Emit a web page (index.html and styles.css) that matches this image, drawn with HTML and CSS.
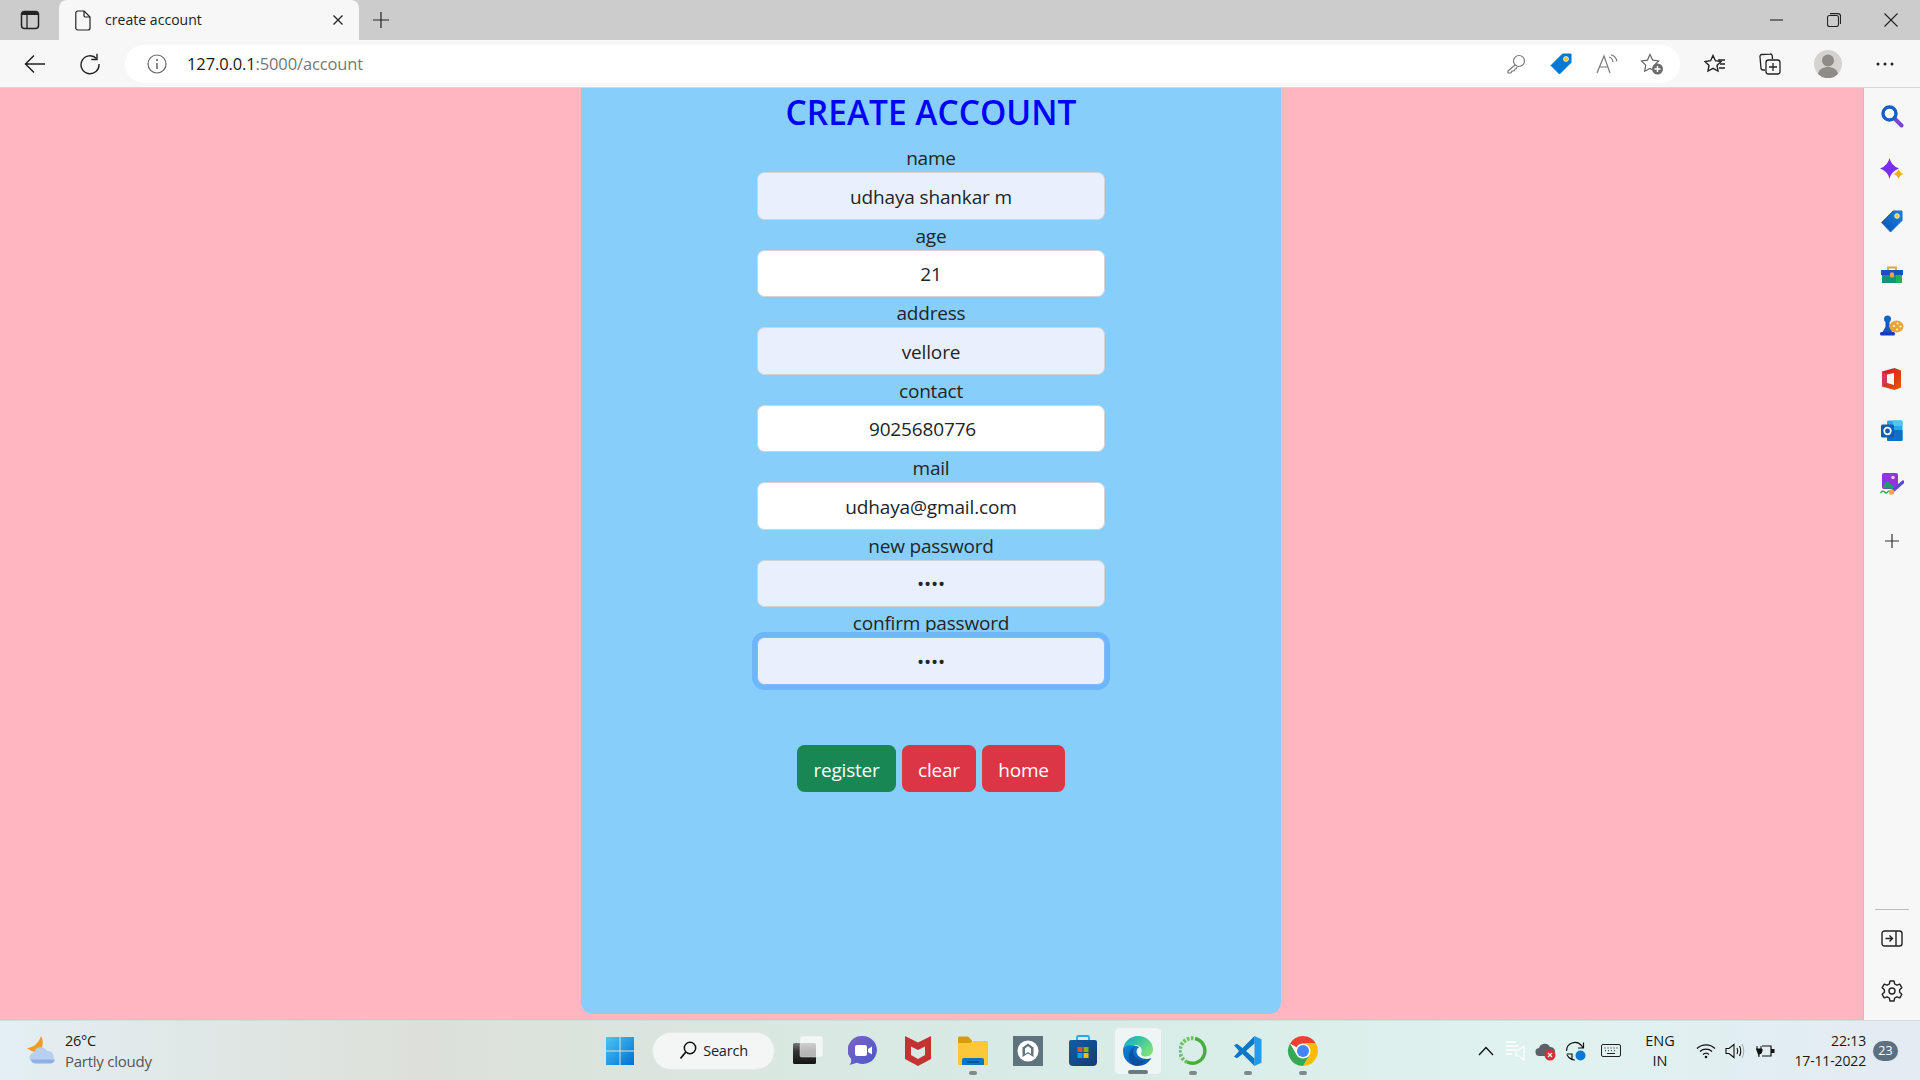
FILE: index.html
```html
<!DOCTYPE html>
<html lang="en">
<head>
<meta charset="utf-8">
<title>create account</title>
<link rel="stylesheet" href="styles.css">
</head>
<body>
<header class="tabstrip">
  <div class="strip-btn">
    <svg width="20" height="20" viewBox="0 0 20 20"><rect x="1.500" y="1.500" width="17" height="17" rx="3" fill="none" stroke="#222" stroke-width="1.500"/><path d="M2 5V3.500Q2 2 3.500 2h13Q18 2 18 3.500V5z" fill="#222"/><path d="M7 5v13" stroke="#222" stroke-width="1.300"/></svg>
  </div>
  <div class="tab">
    <svg class="tab-doc" width="16" height="21" viewBox="0 0 16 21"><path d="M2.800 1h6.400L15 7v11a2 2 0 0 1-2 2H2.800a2 2 0 0 1-2-2V3a2 2 0 0 1 2-2z" fill="none" stroke="#222" stroke-width="1.200"/><path d="M9 1v4.500A1.500 1.500 0 0 0 10.500 7H15" fill="none" stroke="#222" stroke-width="1.200"/></svg>
    <span class="tab-title">create account</span>
    <svg class="tab-close" width="12" height="12" viewBox="0 0 12 12"><path d="M1.500 1.500l9 9M10.500 1.500l-9 9" stroke="#222" stroke-width="1.300"/></svg>
  </div>
  <div class="strip-btn new-tab">
    <svg width="18" height="18" viewBox="0 0 18 18"><path d="M9 1v16M1 9h16" stroke="#222" stroke-width="1.200"/></svg>
  </div>
  <div class="win-controls">
    <div class="win-btn"><svg width="14" height="14" viewBox="0 0 14 14"><path d="M0 7h13" stroke="#222" stroke-width="1.100"/></svg></div>
    <div class="win-btn"><svg width="14" height="14" viewBox="0 0 14 14"><rect x=".5" y="2.500" width="11" height="11" rx="2" fill="none" stroke="#222" stroke-width="1.100"/><path d="M3 .6h8a2.500 2.500 0 0 1 2.500 2.500v8" fill="none" stroke="#222" stroke-width="1.100"/></svg></div>
    <div class="win-btn"><svg width="14" height="14" viewBox="0 0 14 14"><path d="M.5.5l13 13M13.500.5l-13 13" stroke="#222" stroke-width="1.100"/></svg></div>
  </div>
</header>

<nav class="toolbar">
  <div class="tb-btn">
    <svg width="22" height="20" viewBox="0 0 22 20"><path d="M21 10H2M10 1.500L1.500 10l8.500 8.500" fill="none" stroke="#222" stroke-width="1.500"/></svg>
  </div>
  <div class="tb-btn">
    <svg width="22" height="22" viewBox="0 0 22 22"><path d="M17.500 5.500A9 9 0 1 0 20 11" fill="none" stroke="#222" stroke-width="1.400"/><path d="M18 .8v5.700h-5.700" fill="none" stroke="#222" stroke-width="1.400"/></svg>
  </div>
  <div class="addr">
    <svg class="addr-info" width="20" height="20" viewBox="0 0 20 20"><circle cx="10" cy="10" r="9" fill="none" stroke="#666" stroke-width="1.200"/><path d="M10 9v6" stroke="#555" stroke-width="1.400"/><circle cx="10" cy="6" r="1" fill="#555"/></svg>
    <span class="url"><span class="url-host">127.0.0.1</span>:5000/account</span>
    <div class="addr-icons">
      <div class="ai"><svg width="20" height="20" viewBox="0 0 20 20"><circle cx="13" cy="7" r="5.500" fill="none" stroke="#777" stroke-width="1.200"/><path d="M9 11l-7 6v2h3l1-2h2l1-2h1l1-2" fill="none" stroke="#777" stroke-width="1.200"/></svg></div>
      <div class="ai"><svg width="22" height="22" viewBox="0 0 22 22"><path d="M12.500 1H21v8.500L9.500 21 1 12.500z" fill="#0078d4" stroke="#0078d4" stroke-linejoin="round"/><circle cx="16" cy="6" r="2.500" fill="#f5c518" stroke="#fff" stroke-width=".7"/></svg></div>
      <div class="ai"><svg width="22" height="20" viewBox="0 0 22 20"><path d="M1 19L8 2l6 17M3.500 13h9" fill="none" stroke="#777" stroke-width="1.200"/><path d="M13 3q3.500 1 4 5M15 .8q5 1.500 6 6.500" fill="none" stroke="#777" stroke-width="1.200"/></svg></div>
      <div class="ai"><svg width="24" height="22" viewBox="0 0 24 22"><path d="M10 1.500l2.700 5.600 6 .9-4.400 4.200 1 6-5.300-2.800-5.300 2.800 1-6L1.500 8l6-.9z" fill="none" stroke="#666" stroke-width="1.200"/><circle cx="17.500" cy="16" r="5.500" fill="#6d6d6d"/><path d="M17.500 13v6M14.500 16h6" stroke="#fff" stroke-width="1.400"/></svg></div>
    </div>
  </div>
  <div class="tb-btn tb-first">
    <svg width="22" height="20" viewBox="0 0 22 20"><path d="M9 1.500l2.400 5.200 5.600.8-4 3.900 1 5.600-5-2.700-5 2.700 1-5.600-4-3.900 5.600-.8z" fill="none" stroke="#222" stroke-width="1.400"/><path d="M14 6h7M16 10h5M15 14h6" stroke="#222" stroke-width="1.300"/></svg>
  </div>
  <div class="tb-btn">
    <svg width="22" height="22" viewBox="0 0 22 22"><path d="M6 17H4a2 2 0 0 1-2-1.500L1 4a2 2 0 0 1 1.800-2.500L11 1a2 2 0 0 1 2.200 1.700L13.500 6" fill="none" stroke="#222" stroke-width="1.300"/><rect x="7" y="7" width="14" height="14" rx="2.500" fill="#f7f7f7" stroke="#222" stroke-width="1.300"/><path d="M14 10v8M10 14h8" stroke="#222" stroke-width="1.300"/></svg>
  </div>
  <div class="tb-btn tb-avatar">
    <svg width="28" height="28" viewBox="0 0 28 28"><circle cx="14" cy="14" r="14" fill="#d5d3d0"/><circle cx="14" cy="10.500" r="6" fill="#8f8c88"/><path d="M4 24c1-5 5-7 10-7s9 2 10 7a14 14 0 0 1-20 0z" fill="#8f8c88"/></svg>
  </div>
  <div class="tb-btn">
    <svg width="18" height="4" viewBox="0 0 18 4"><circle cx="2" cy="2" r="1.500" fill="#222"/><circle cx="9" cy="2" r="1.500" fill="#222"/><circle cx="16" cy="2" r="1.500" fill="#222"/></svg>
  </div>
</nav>

<div class="viewport">
  <main class="page">
    <form class="card">
      <h1 class="card-title">CREATE ACCOUNT</h1>
      <label class="field-label">name</label>
      <input class="field autofilled" type="text" value="udhaya shankar m">
      <label class="field-label">age</label>
      <input class="field" type="text" value="21">
      <label class="field-label">address</label>
      <input class="field autofilled" type="text" value="vellore">
      <label class="field-label">contact</label>
      <input class="field field-number" type="text" value="9025680776">
      <label class="field-label">mail</label>
      <input class="field" type="text" value="udhaya@gmail.com">
      <label class="field-label">new password</label>
      <input class="field autofilled" type="password" value="1234">
      <label class="field-label">confirm password</label>
      <input class="field autofilled focused" type="password" value="1234">
      <div class="actions">
        <button class="btn btn-register" type="button">register</button>
        <button class="btn btn-clear" type="button">clear</button>
        <button class="btn btn-home" type="button">home</button>
      </div>
    </form>
  </main>
  <aside class="sidebar">
    <div class="side-list">
      <div class="side-item"><svg width="24" height="24" viewBox="0 0 24 24"><path d="M14 14l7.500 7.500" stroke="#7b45d6" stroke-width="4" stroke-linecap="round"/><circle cx="9.500" cy="9.500" r="6.500" fill="#fff" stroke="#1261c4" stroke-width="3.400"/></svg></div>
      <div class="side-item"><svg class="nudge" width="24" height="24" viewBox="0 0 24 24"><path d="M9.500 0Q11 7.500 19 10.500 11 13.500 9.500 21 8 13.500 0 10.500 8 7.500 9.500 0z" fill="#7a2ff0"/><path d="M18.500 11q.9 3.700 5 5-4.100 1.300-5 5-.9-3.700-5-5 4.100-1.300 5-5z" fill="#f4ad16"/></svg></div>
      <div class="side-item"><svg width="24" height="24" viewBox="0 0 24 24"><defs><linearGradient id="tg" x1="0" y1="1" x2="1" y2="0"><stop offset="0" stop-color="#0b4db5"/><stop offset="1" stop-color="#1a86d8"/></linearGradient></defs><path d="M13 2h9v9.500L10.500 23 1.500 13.500z" fill="url(#tg)" stroke="#1a6fcc" stroke-linejoin="round"/><circle cx="17" cy="7" r="2.300" fill="#f7c326" stroke="#fff" stroke-width=".8"/></svg></div>
      <div class="side-item"><svg class="nudge" width="24" height="24" viewBox="0 0 24 24"><path d="M8 7V4.500h8V7" fill="none" stroke="#e8a33d" stroke-width="1.800"/><rect x="1" y="7" width="22" height="5" fill="#1b4fc0"/><rect x="2" y="12" width="20" height="8" fill="#14917a"/><rect x="16" y="12" width="6" height="8" fill="#2bab5a"/><rect x="10" y="9.500" width="4" height="5" rx="1" fill="#f2a92b"/></svg></div>
      <div class="side-item"><svg width="24" height="24" viewBox="0 0 24 24"><circle cx="7.500" cy="5" r="3.500" fill="#1463c9"/><path d="M5.500 8h4v5l3 5H2.500l3-5z" fill="#1a53c2"/><rect x="0" y="18" width="15" height="3.500" rx="1.500" fill="#133fb0"/><ellipse cx="16.500" cy="12.500" rx="7" ry="6" fill="#e8a33a"/><circle cx="14" cy="12" r="1.100" fill="#fff2c8"/><circle cx="17.500" cy="9.500" r="1.100" fill="#fff2c8"/><circle cx="20.500" cy="12.500" r="1.100" fill="#fff2c8"/><circle cx="17" cy="15.500" r="1.100" fill="#fff2c8"/></svg></div>
      <div class="side-item"><svg width="24" height="24" viewBox="0 0 24 24"><defs><linearGradient id="of" x1="0" y1="0" x2="1" y2="1"><stop offset="0" stop-color="#c81a2c"/><stop offset=".6" stop-color="#e03a12"/><stop offset="1" stop-color="#e85d04"/></linearGradient></defs><path d="M14.500 1L21 3.500v17L14.500 23 2 19.500l0-15z" fill="url(#of)"/><path d="M7 7.500l7-1.500v12l-7-2z" fill="#f7f7f7"/><path d="M2 19.500l0-15L7 7.500v8.500z" fill="#d9365a"/></svg></div>
      <div class="side-item"><svg width="24" height="24" viewBox="0 0 24 24"><rect x="7" y="1.500" width="15.500" height="20.500" rx="1.500" fill="#29a8ea"/><path d="M7 11h15.500v9.500a1.500 1.500 0 0 1-1.500 1.500H8.500A1.500 1.500 0 0 1 7 20.500z" fill="#0f6fc6"/><path d="M13 1.500h9.500V7H13z" fill="#55c3f2"/><rect x="1" y="5.500" width="13" height="13" rx="1.500" fill="#0a5fb4"/><circle cx="7.500" cy="12" r="3.300" fill="none" stroke="#fff" stroke-width="1.700"/></svg></div>
      <div class="side-item"><svg width="24" height="24" viewBox="0 0 24 24"><rect x="2" y="1" width="16" height="16" rx="2" fill="#9233dd"/><circle cx="13" cy="5.500" r="1.800" fill="#e9c8ff"/><path d="M2 16l5-7 5 4 3 4z" fill="#1d9f5e"/><path d="M.5 21q2-3 4-1t3 0 3 .5" fill="none" stroke="#28a359" stroke-width="1.300"/><path d="M23 10L12 19.500" stroke="#5a49d8" stroke-width="3.200" stroke-linecap="round"/><circle cx="11.500" cy="20" r="2.800" fill="#eca83a"/></svg></div>
      <div class="side-item side-add"><svg width="16" height="16" viewBox="0 0 16 16"><path d="M8 1v14M1 8h14" stroke="#333" stroke-width="1.200"/></svg></div>
    </div>
    <div class="side-foot">
      <div class="side-rule"></div>
      <div class="side-item side-panel"><svg width="22" height="18" viewBox="0 0 22 18"><rect x="1" y="1" width="20" height="15" rx="2.500" fill="none" stroke="#222" stroke-width="1.400"/><path d="M15 1v15" stroke="#222" stroke-width="1.400"/><path d="M4.500 8.500h7M8.500 5.500l3 3-3 3" fill="none" stroke="#222" stroke-width="1.400"/></svg></div>
      <div class="side-item side-gear"><svg width="22" height="22" viewBox="0 0 22 22"><path d="M9 1h4l.7 3 2.200 1.200 2.900-1 2 3.500-2.200 2 0 2.600 2.200 2-2 3.500-2.900-1-2.200 1.200-.7 3H9l-.7-3-2.200-1.200-2.900 1-2-3.500 2.200-2 0-2.600-2.200-2 2-3.500 2.900 1L8.300 4z" fill="none" stroke="#222" stroke-width="1.400" stroke-linejoin="round"/><circle cx="11" cy="11" r="3" fill="none" stroke="#222" stroke-width="1.400"/></svg></div>
    </div>
  </aside>
</div>

<footer class="taskbar">
  <div class="weather">
    <svg width="30" height="32" viewBox="0 0 30 32"><path d="M15 1c3 5 2 12-2 16-3 1-9-1-12-4 6 0 12-5 14-12z" fill="#f29b1f"/><path d="M9 27.500a5 5 0 0 1-1-10 7 7 0 0 1 13-1.500 6 6 0 0 1 3 11.500z" fill="#b7cff0"/><path d="M5 24.500h24a5 5 0 0 1-5 4H9a5 5 0 0 1-4-4z" fill="#8fb0e2"/></svg>
    <div class="weather-text">
      <div class="weather-temp">26°C</div>
      <div class="weather-desc">Partly cloudy</div>
    </div>
  </div>
  <div class="start">
    <svg width="30" height="30" viewBox="0 0 30 30"><defs><linearGradient id="wn" x1="0" y1="0" x2="1" y2="1"><stop offset="0" stop-color="#4cc6f7"/><stop offset="1" stop-color="#0070cf"/></linearGradient></defs><path d="M1 1h13.500v13.500H1zM15.500 1H29v13.500H15.500zM1 15.500h13.500V29H1zM15.500 15.500H29V29H15.500z" fill="url(#wn)"/></svg>
  </div>
  <div class="search-pill">
    <svg width="18" height="19" viewBox="0 0 18 19"><circle cx="11" cy="7" r="5.700" fill="none" stroke="#111" stroke-width="1.500"/><path d="M6.800 11L1.500 17.500" stroke="#111" stroke-width="1.700"/></svg>
    <span>Search</span>
  </div>
  <div class="apps">
    <div class="app"><svg width="32" height="30" viewBox="0 0 32 30"><defs><linearGradient id="tv" x1="0" y1="0" x2="0" y2="1"><stop offset="0" stop-color="#777"/><stop offset=".4" stop-color="#333"/><stop offset="1" stop-color="#151515"/></linearGradient></defs><rect x="1" y="7" width="23" height="21" rx="1.500" fill="url(#tv)"/><rect x="8" y="0" width="23" height="21" rx="1.500" fill="#fff" fill-opacity=".65" stroke="#ddd" stroke-width=".5"/></svg></div>
    <div class="app"><svg width="30" height="32" viewBox="0 0 30 32"><defs><linearGradient id="mt" x1="0" y1="0" x2="1" y2="1"><stop offset="0" stop-color="#7b62c8"/><stop offset="1" stop-color="#4b59c8"/></linearGradient></defs><path d="M15 1a14 14 0 1 1-6 26.700L1.500 30c1.500-2 2-4 1.500-6A14 14 0 0 1 15 1z" fill="url(#mt)"/><rect x="7" y="10" width="12" height="11" rx="2" fill="#fff"/><path d="M20 14l4-2.500v8L20 17z" fill="#fff"/></svg></div>
    <div class="app"><svg width="28" height="32" viewBox="0 0 28 32"><path d="M1 1l13 6.500L27 1v23l-13 7-13-7zM7 11.500V20l7 4 7-4v-8.500l-7 3.500z" fill="#c43232" fill-rule="evenodd"/></svg></div>
    <div class="app has-dot"><svg width="32" height="30" viewBox="0 0 32 30"><path d="M1 2a1.500 1.500 0 0 1 1.500-1.500H11l4 4v4H1z" fill="#d99b0b"/><path d="M1 7h12l3-2h14.500A1 1 0 0 1 31 6v23H1z" fill="#fcc83a"/><path d="M5 24a2 2 0 0 1 2-2h18a2 2 0 0 1 2 2v5H5z" fill="#0a74c9"/><path d="M10 26h12" stroke="#033f7a" stroke-width="1.200"/></svg></div>
    <div class="app"><svg width="30" height="30" viewBox="0 0 30 30"><rect width="30" height="30" fill="#607480"/><circle cx="15" cy="15" r="10.500" fill="#fff"/><path d="M9.500 21V11.500L15 7.500l5.500 4V21L15 17.500z" fill="#607480"/><path d="M12 18V12.500l3-2.200 3 2.200V18l-3-2z" fill="#fff"/></svg></div>
    <div class="app"><svg width="30" height="32" viewBox="0 0 30 32"><defs><linearGradient id="st" x1="0" y1="0" x2="1" y2="1"><stop offset="0" stop-color="#0d5ea8"/><stop offset="1" stop-color="#173a70"/></linearGradient></defs><path d="M9 6V2.500A1.500 1.500 0 0 1 10.500 1h9A1.500 1.500 0 0 1 21 2.500V6" fill="none" stroke="#28a8ea" stroke-width="1.800"/><path d="M1 7a2 2 0 0 1 2-2h24a2 2 0 0 1 2 2v20a4 4 0 0 1-4 4H5a4 4 0 0 1-4-4z" fill="url(#st)"/><rect x="9.500" y="12" width="5" height="5" fill="#f25022"/><rect x="15.500" y="12" width="5" height="5" fill="#7fba00"/><rect x="9.500" y="18" width="5" height="5" fill="#00a4ef"/><rect x="15.500" y="18" width="5" height="5" fill="#ffb900"/></svg></div>
    <div class="app app-active has-bar"><svg width="32" height="32" viewBox="0 0 32 32"><defs><linearGradient id="eg" x1="0" y1="0" x2="1" y2=".6"><stop offset="0" stop-color="#1b9de2"/><stop offset=".45" stop-color="#35c1a5"/><stop offset="1" stop-color="#7de07a"/></linearGradient><linearGradient id="eb" x1="0" y1="0" x2=".7" y2="1"><stop offset="0" stop-color="#0c84d6"/><stop offset="1" stop-color="#0a5cb0"/></linearGradient></defs><path d="M1 16C1 7.700 7.700 1 16 1c8.500 0 15 6 15 13.500 0 4.200-3.200 7-7.200 7-2.600 0-4.800-1-4.800-2.600 0-.8.800-1.400.8-3C19.800 12.500 17 10 13.500 10 7 10 3 13 1 16z" fill="url(#eg)"/><path d="M1 16c0 8.500 6.800 15 15 15 5.500 0 10.500-3 13.500-8-.3.200-2 1-4.500 1-6 0-10.500-3.500-10.500-7.500 0-1.800 1-3.500 2.800-4.600C9.500 9 1 10 1 16z" fill="url(#eb)"/><path d="M14 31c-5-1-8-6-7-11.500C8 15 11 12 14 11c-2 1.500-3 3.200-3 5.500 0 6 6 9.500 12 9-2.500 3.500-5.500 5-9 5.500z" fill="#0d3f8f" fill-opacity=".6"/></svg></div>
    <div class="app has-dot"><svg width="28" height="30" viewBox="0 0 28 30"><path d="M16 2.500A12.500 12.500 0 1 1 8 26" fill="none" stroke="#45b039" stroke-width="3.500"/><path d="M8 26A12.500 12.500 0 0 1 16 2.500" fill="none" stroke="#6fc062" stroke-width="4" stroke-dasharray="2.500 1.500"/></svg></div>
    <div class="app has-dot"><svg width="30" height="32" viewBox="0 0 30 32"><path d="M21.500 1l7 3.300v23.400l-7 3.300z" fill="#1f9cf0"/><path d="M21.500 1L9.500 13 4 8.800 1 10.300 6 16l-5 5.700 3 1.500L9.500 19l12 12v-7.500L13 16l8.500-7.500z" fill="#0a78c7"/></svg></div>
    <div class="app has-dot"><svg width="32" height="32" viewBox="0 0 32 32"><circle cx="16" cy="16" r="15" fill="#fff"/><path d="M3 8.500A15 15 0 0 1 29 8.500H16A7.500 7.500 0 0 0 9.500 12.200z" fill="#e94235"/><path d="M29 8.500A15 15 0 0 1 16 31l6.500-11.300A7.500 7.500 0 0 0 16 8.500z" fill="#fbbc04"/><path d="M16 31A15 15 0 0 1 3 8.500l6.500 11.200a7.500 7.500 0 0 0 13 0z" fill="#34a853"/><circle cx="16" cy="16" r="6" fill="#4285f4"/></svg></div>
  </div>
  <div class="tray">
    <div class="tray-item w30"><svg width="16" height="10" viewBox="0 0 16 10"><path d="M1 9l7-7.500L15 9" fill="none" stroke="#111" stroke-width="1.300"/></svg></div>
    <div class="tray-item w30"><svg width="22" height="20" viewBox="0 0 22 20"><path d="M1 1h10M1 5h12M1 9h9M1 13h6" stroke="#fff" stroke-width="1.300"/><path d="M11 9h3l5-4v14l-5-4h-3z" fill="none" stroke="#fff" stroke-width="1.200"/></svg></div>
    <div class="tray-item w30"><svg width="22" height="20" viewBox="0 0 22 20"><path d="M5 15a4 4 0 0 1-1-8 6 6 0 0 1 11-1 4 4 0 0 1 1 9z" fill="#5c6168"/><circle cx="15" cy="14" r="5.500" fill="#e02b36"/><path d="M13 12l4 4M17 12l-4 4" stroke="#fff" stroke-width="1.200"/></svg></div>
    <div class="tray-item w30"><svg width="22" height="22" viewBox="0 0 22 22"><path d="M1.500 11a8.500 8.500 0 0 1 15-5.500l1.500 2.500M18.500 2.500V8h-5.500" fill="none" stroke="#111" stroke-width="1.200"/><path d="M1.500 14h5.500v5.500M2 15l2 2.500a8 8 0 0 0 6 2.500" fill="none" stroke="#111" stroke-width="1.200"/><circle cx="15.500" cy="15.500" r="5" fill="#0a78d4"/></svg></div>
    <div class="tray-item w40"><svg width="20" height="14" viewBox="0 0 20 14"><rect x=".5" y=".5" width="19" height="12" rx="1.500" fill="none" stroke="#222"/><path d="M3.500 4h1M6.500 4h1M9.500 4h1M12.500 4h1M15.500 4h1M4 6.700h1M7 6.700h1M10 6.700h1M13 6.700h1M6 9.500h8" stroke="#222"/></svg></div>
    <div class="tray-item tray-lang">ENG<br>IN</div>
    <div class="tray-item w34"><svg width="20" height="16" viewBox="0 0 20 16"><path d="M1 5.500a13 13 0 0 1 18 0M4 8.500a9 9 0 0 1 12 0M7 11.500a4.500 4.500 0 0 1 6 0" fill="none" stroke="#111" stroke-width="1.300"/><circle cx="10" cy="14" r="1.300" fill="#111"/></svg></div>
    <div class="tray-item w24"><svg width="20" height="16" viewBox="0 0 20 16"><path d="M1 5.500h3L9 1.500v13L4 10.500H1z" fill="none" stroke="#111" stroke-width="1.100"/><path d="M12 5q1.500 3 0 6M14.500 3q2.500 5 0 10" fill="none" stroke="#111" stroke-width="1.100"/><path d="M17 1q3.500 7 0 14" fill="none" stroke="#aaa" stroke-width="1"/></svg></div>
    <div class="tray-item w38"><svg width="20" height="14" viewBox="0 0 20 14"><path d="M1 2v3M5 2v3M0 5h6v2a3 3 0 0 1-3 3v3" fill="#111" stroke="#111"/><path d="M6 2h9v10H6" fill="none" stroke="#111" stroke-width="1.200"/><rect x="15" y="5" width="3.500" height="4" fill="#111"/></svg></div>
    <div class="clock">22:13<br>17-11-2022</div>
    <div class="badge">23</div>
  </div>
</footer>
</body>
</html>
```
FILE: styles.css
```css
* { box-sizing: border-box; }
html, body { margin: 0; height: 100%; }
body {
  display: flex;
  flex-direction: column;
  height: 100vh;
  overflow: hidden;
  font-family: "Open Sans", "Noto Sans", "Liberation Sans", sans-serif;
  color: #212529;
}
svg { display: block; flex: none; }

/* browser chrome */
.tabstrip { height: 40px; background: #cccccc; display: flex; align-items: center; flex: none; }
.strip-btn { width: 59px; height: 40px; display: flex; align-items: center; justify-content: center; }
.tab {
  width: 300px; height: 40px; background: #f7f7f7;
  border-radius: 8px 8px 0 0;
  display: flex; align-items: center; padding-left: 16px;
}
.tab-title { font-size: 14px; color: #222; margin-left: 14px; flex: 1; letter-spacing: .04px; padding-bottom: 2px; }
.tab-close { margin-right: 15px; }
.new-tab { width: 44px; }
.win-controls { margin-left: auto; display: flex; padding-right: 1px; }
.win-btn { width: 57px; height: 40px; display: flex; align-items: center; justify-content: center; }

.toolbar { height: 48px; background: #f7f7f7; display: flex; align-items: center; flex: none; padding: 0 13px; gap: 11px; border-bottom: 1px solid #d8d8d8; }
.tb-btn { width: 44px; height: 38px; display: flex; align-items: center; justify-content: center; flex: none; }
.tb-first { margin-left: 2px; }
.tb-avatar { margin-left: 3px; margin-right: 2px; }
.addr { flex: 1; height: 38px; margin-left: 2px; background: #fff; border-radius: 19px; display: flex; align-items: center; padding-left: 22px; }
.addr-info { margin-right: 20px; }
.url { font-size: 16.500px; color: #767676; letter-spacing: -.12px; }
.url-host { color: #1a1a1a; }
.addr-icons { margin-left: auto; display: flex; align-items: center; gap: 21.500px; padding-right: 16px; }
.ai { width: 24px; height: 24px; display: flex; align-items: center; justify-content: center; }

.viewport { flex: 1; display: flex; min-height: 0; }
.page { flex: 1; background: #ffb6c1; display: flex; justify-content: center; align-items: flex-start; padding: 0 1px 6px 0; height: 100%; min-width: 0; }

/* form card */
.card {
  width: 700px; height: 100%; background: #87cefa;
  border-radius: 0 0 12px 12px;
  display: flex; flex-direction: column; align-items: center;
  padding-top: 3px;
}
.card-title { margin: 0 0 9px; font-size: 33.500px; line-height: 42px; font-weight: 600; color: #0000ff; letter-spacing: 0; }
.field-label { display: block; height: 30px; line-height: 32px; font-size: 19px; color: #212529; letter-spacing: -.2px; text-align: center; }
.field {
  display: block; width: 348px; height: 47.500px; flex: none;
  border: 1px solid #ced4da; border-radius: 7.500px;
  background: #fff; color: #212529;
  text-align: center; font: inherit; font-size: 19px; letter-spacing: -.15px;
  padding: 2px 15px 0; outline: none;
}
.field-number { padding-right: 32px; }
.autofilled { background: #e8f0fe; }
.focused { box-shadow: 0 0 0 5px #6cb6fc; border-color: #86b7fe; }
.actions { display: flex; gap: 6px; margin-top: 60.500px; }
.btn { height: 47px; border: 0; border-radius: 7.500px; color: #fff; font: inherit; font-size: 19px; letter-spacing: -.2px; padding: 2px 0 0; }
.btn-register { width: 99px; background: #198754; }
.btn-clear { width: 74px; background: #dc3545; }
.btn-home { width: 83px; background: #dc3545; }

/* sidebar */
.sidebar { width: 57px; flex: none; background: #f7f7f7; border-left: 1px solid #b9c6c6; display: flex; flex-direction: column; justify-content: space-between; }
.side-list { padding-top: 2px; display: flex; flex-direction: column; }
.side-item { height: 52.500px; display: flex; align-items: center; justify-content: center; }
.nudge { margin-top: 2px; }
.side-add { margin-top: 5px; }
.side-rule { height: 1px; margin: 0 11px 6px; background: #bdbdbd; }
.side-panel { height: 46px; }
.side-gear { height: 58px; }

/* taskbar */
.taskbar {
  height: 60px; flex: none; display: flex; align-items: center;
  background: linear-gradient(90deg, #e4eff3 0%, #dfe6e4 12%, #dde0da 22%, #d9e8e2 42%, #d8ece8 60%, #dff2ef 80%, #e4ebf3 100%);
  border-top: 1px solid #d6dbdb;
}
.weather { width: 600px; display: flex; align-items: center; padding-left: 26px; gap: 9px; }
.weather-text { font-size: 15px; line-height: 20px; letter-spacing: -.25px; }
.weather-temp { color: #1a1a1a; font-size: 14.500px; }
.weather-desc { color: #555; }
.start { width: 40px; display: flex; justify-content: center; }
.search-pill { width: 123px; height: 38px; margin-left: 12px; background: #f3f6f5; border-radius: 19px; border: 1px solid #e4e8e8; display: flex; align-items: center; justify-content: center; gap: 6px; font-size: 14.500px; color: #222; letter-spacing: -.2px; }
.apps { display: flex; margin-left: 5.500px; }
.app { width: 55px; height: 48px; display: flex; align-items: center; justify-content: center; position: relative; }
.app-active { background: #eef6f5; border: 1px solid #e0e8e7; border-radius: 5px; width: 48px; margin: 0 3.500px; }
.has-dot::after, .has-bar::after { content: ""; position: absolute; bottom: 0; left: 50%; height: 4px; border-radius: 2px; background: #7f8a8d; }
.has-dot::after { width: 8px; margin-left: -4px; }
.has-bar::after { width: 20px; margin-left: -10px; bottom: 0; background: #6b7a80; }
.tray { margin-left: auto; display: flex; align-items: center; padding-right: 22px; color: #1a1a1a; }
.tray-item { display: flex; align-items: center; justify-content: center; height: 48px; }
.w24 { width: 24px; } .w30 { width: 30px; } .w34 { width: 34px; } .w38 { width: 38px; } .w40 { width: 40px; }
.tray-lang { width: 58px; font-size: 14.500px; line-height: 20px; text-align: center; }
.clock { width: 81px; font-size: 14px; line-height: 20px; text-align: right; letter-spacing: -.15px; white-space: nowrap; }
.badge { width: 25px; height: 20px; margin-left: 7px; border-radius: 10px; background: #5c7080; color: #fff; font-size: 12.500px; line-height: 20px; text-align: center; }
```
